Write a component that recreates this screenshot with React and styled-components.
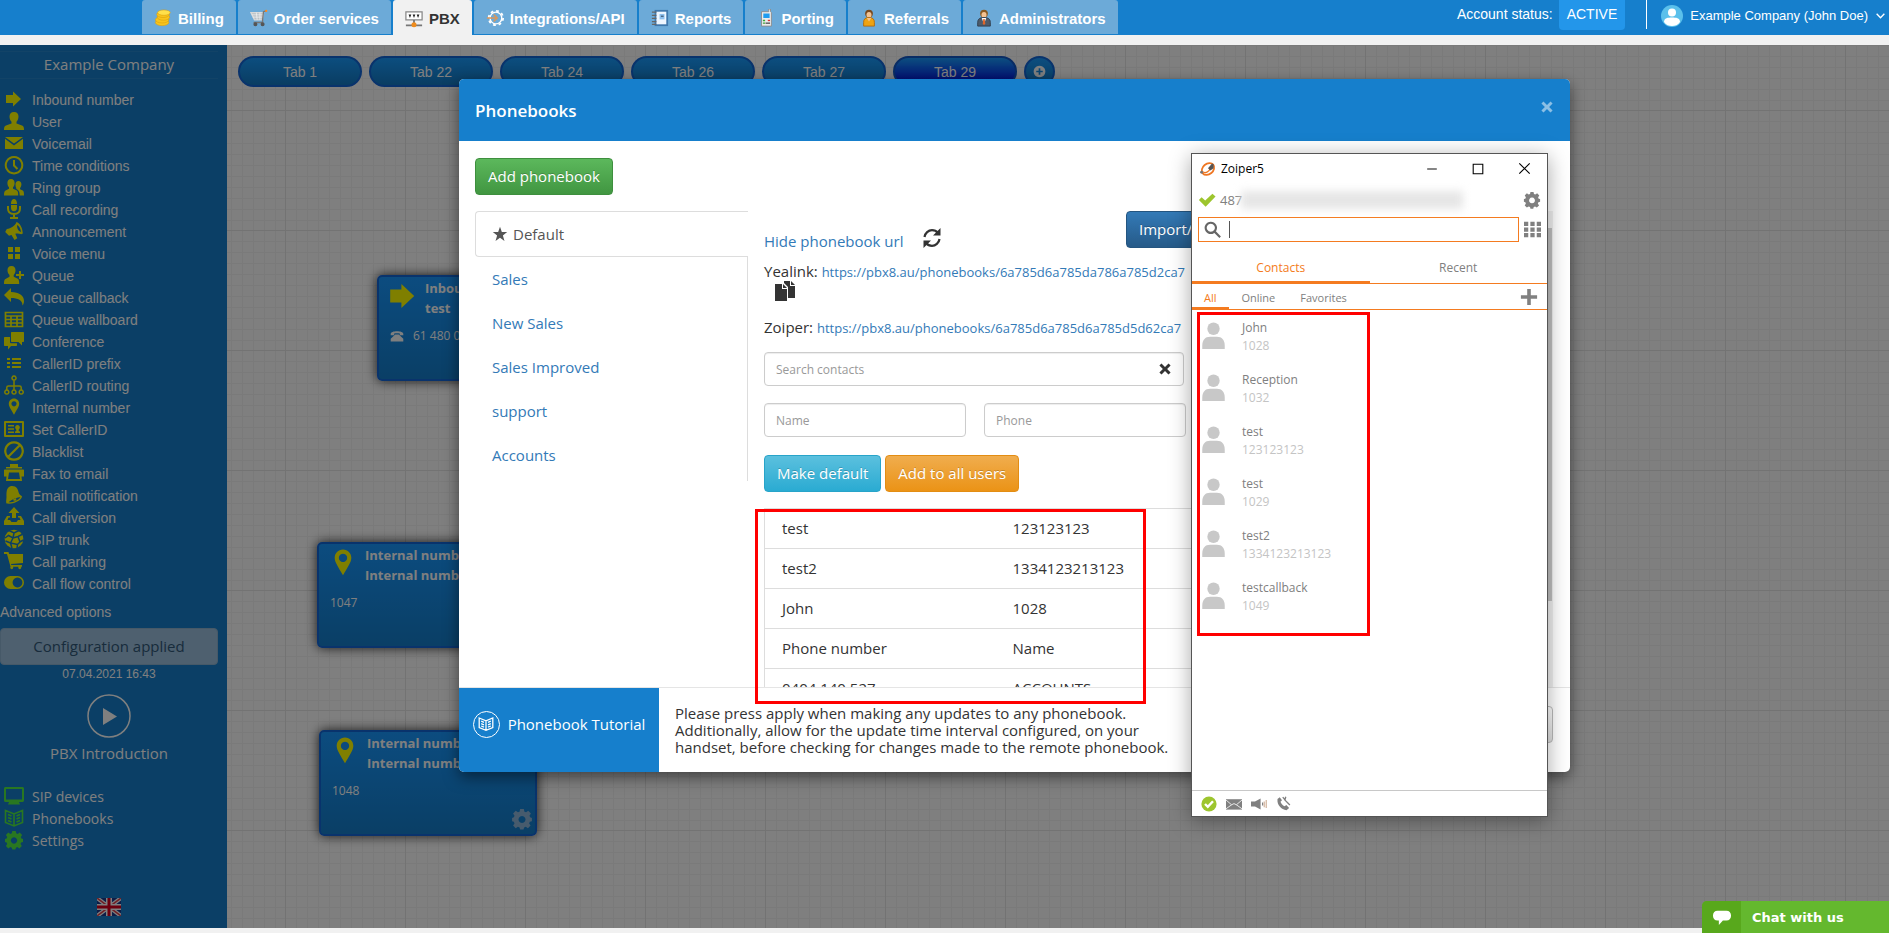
import { useState } from "react";
import styled, { createGlobalStyle, css } from "styled-components";

const sans = `"Liberation Sans", Arial, sans-serif`;
const humanist = `"Open Sans", "Noto Sans", sans-serif`;

const ICONS = {
  arrow: <path d="M2 6h7V2.500l8 7.500-8 7.500V14H2z" />,
  user: (
    <path d="M10 1c3 0 4.500 2 4.500 4.500 0 2-.8 4-2 5.200v1.800l5.500 2c1.300.5 2 1.500 2 4.500H0c0-3 .7-4 2-4.500l5.500-2v-1.800c-1.200-1.200-2-3.200-2-5.200C5.500 3 7 1 10 1z" />
  ),
  mail: <path d="M1 4h18l-9 6.500zM1 5.800l9 6.700 9-6.700V16H1z" />,
  clock: (
    <path
      d="M10 2a8.200 8.200 0 1 0 .01 0M10 5v5.500l3.500 3.500"
      fill="none"
      stroke="currentColor"
      strokeWidth="2"
    />
  ),
  group: (
    <path d="M7 2c2.500 0 3.600 1.700 3.600 4 0 1.800-.6 3.300-1.600 4.300v1.500l3.500 1.500c1.200.6 1.700 1.700 1.700 5.200H0c0-3.500.5-4.600 1.700-5.100L5 11.800v-1.500C4 9.300 3.400 7.800 3.400 6 3.400 3.700 4.500 2 7 2zM14.500 4c1.900 0 2.900 1.400 2.900 3.300 0 1.500-.5 2.800-1.300 3.600v1.300l2.600 1.300c1 .5 1.300 1.700 1.300 5h-4.300c0-3.500-.6-5.300-3.400-6.500v-1.100c-.6-.8-.8-1.900-.8-3.300 0-2 1-3.600 3-3.600z" />
  ),
  mic: (
    <>
      <path d="M7 4.500C7 2 8.300 0 10 0s3 2 3 4.500V5H7zM7 6h6v3c0 2-1 3.200-3 3.200S7 11 7 9z" />
      <path
        d="M4 7v2.500c0 3.500 2 5.500 6 5.500s6-2 6-5.500V7M10 15v4M6 19h8"
        fill="none"
        stroke="currentColor"
        strokeWidth="2"
      />
    </>
  ),
  horn: (
    <path d="M12.500 1c3 1 6 5 6.300 11.500l-1.500.8c-2-.8-4-1-6-.5l2 4.500-2.800 1.600-3-4.900-2.500.7L1.200 11l1.600-3C7 7.500 11 5 12.500 1zm.7 3c-.5 3 1 6 3.800 7-.4-3.500-2-6-3.800-7z" />
  ),
  tiles: <path d="M4 4h5v5H4zM11 4h5v5h-5zM4 11h5v5H4zM11 11h5v5h-5z" />,
  userPlus: (
    <path d="M7.500 1c2.800 0 4 1.800 4 4.200 0 2-.7 3.600-1.800 4.700v1.800l4 2c1.200.6 1.500 2 1.500 5.300H0c0-3.500.4-4.500 1.500-5l4-2.300V9.900C4.300 8.800 3.500 7.200 3.500 5.200 3.500 2.800 4.700 1 7.500 1zM15 6h2v3h3v2h-3v3h-2v-3h-3V9h3z" />
  ),
  reply: <path d="M7 1v4c8 0 13 3.500 13 9 0 1.500-.4 3-1.500 4.500C18.500 13 14 11 7 11v4L0 8z" />,
  table: (
    <path
      d="M1.500 3.500h17v14h-17zM1.500 7h17M1.500 10.500h17M1.500 14h17M7 7v10M13 7v10"
      fill="none"
      stroke="currentColor"
      strokeWidth="1.700"
    />
  ),
  chat: (
    <path d="M8 1h11c.7 0 1 .3 1 1v8c0 .7-.3 1-1 1h-1v3.500L14.500 11H8c-.7 0-1-.3-1-1V2c0-.7.3-1 1-1zM1 6h5v5c0 .8.400 1.300 1.200 1.300H13V14c0 .7-.3 1-1 1H7l-3 3.500V15H1c-.7 0-1-.3-1-1V7c0-.7.3-1 1-1z" />
  ),
  list: <path d="M3 5h3v2H3zM8 5h9v2H8zM3 9h3v2H3zM8 9h9v2H8zM3 13h3v2H3zM8 13h9v2H8z" />,
  tree: (
    <path
      d="M10 1a2 2 0 1 0 .01 0M10 5.500V15M2.800 15v-2.500C2.800 11.500 3.500 11 4.500 11h11c1 0 1.700.5 1.700 1.500V15M2.800 15a2 2 0 1 0 .01 0M10 15a2 2 0 1 0 .01 0M17.200 15a2 2 0 1 0 .01 0"
      fill="none"
      stroke="currentColor"
      strokeWidth="1.500"
    />
  ),
  pin: (
    <path
      fillRule="evenodd"
      d="M10 1.500c3 0 5.200 2.300 5.200 5.200 0 3-2.500 6-5.200 11-2.700-5-5.200-8-5.200-11 0-2.900 2.200-5.200 5.200-5.200zm0 2.700a2.600 2.600 0 1 0 .01 0z"
    />
  ),
  idCard: (
    <>
      <path
        d="M1 3h18v14H1z"
        fill="none"
        stroke="currentColor"
        strokeWidth="2"
        strokeLinejoin="round"
      />
      <path d="M4 6h6v1.500H4zM4 9.200h6v1.500H4zM4 12.400h6V14H4zM13.500 6c1.500 0 2.300 1 2.300 2.300 0 1-.4 1.800-1 2.200l-.2 1.500 1.400.5V14h-5v-1.500l1.400-.5-.2-1.500c-.6-.4-1-1.200-1-2.200C11.200 7 12 6 13.500 6z" />
    </>
  ),
  ban: (
    <path
      d="M10 1.300a8.700 8.700 0 1 0 .01 0M4.500 15.500l11-11"
      fill="none"
      stroke="currentColor"
      strokeWidth="2.200"
    />
  ),
  printer: (
    <path
      fillRule="evenodd"
      d="M6 1h8v3h4v1.500H2V4h4zM1 6.500h18c.6 0 1 .4 1 1v6h-2.500L18 18H2l.5-4.500H0v-6c0-.6.4-1 1-1zM5 9.500L4 16h12l-1-6.500z"
    />
  ),
  bell: (
    <path
      fillRule="evenodd"
      d="M7 1c5.500-.5 7 3 7.500 6 .5 2.500 2 3.300 3.500 4.300 0 3.500-7 8.200-15.500 7.200-.8-1.500 0-4 0-6.500C2.500 8 2 2.500 7 1zm9.500 11c-3 .5-8.500 2-12 5.300 4.500.2 10-2 12-5.300zM9 14.500l3-1.300c.8 1 .2 2.300-1 2.600-1 .2-1.800-.3-2-1.300z"
    />
  ),
  upload: (
    <path d="M10 0l5.500 6H12v5H8V6H4.500zM3 9h3v1.500H4.500L3.500 13H6l1.500 2h5L14 13h2.500l-1-2.500H14V9h3l3 5v4H0v-4z" />
  ),
  ball: (
    <>
      <circle cx="10" cy="10" r="9.300" />
      <path
        d="M5 1.500L10 4l5-2.500M10 4l-1 5M1 9l3.500-2.500L9 9l5-1.500 4-2M14 7.500l2 5.500 3.500-2M9 9l-2.500 5L1.500 12M6.500 14l1.500 5M6.500 14l7 1.500L16 13M13.500 15.500L13 19"
        fill="none"
        stroke="#167fcc"
        strokeWidth="1.500"
      />
    </>
  ),
  cart: (
    <path d="M0 1h4.500l.6 2H19v9l-12 1 .3 1H18v1.800h-1a1.500 1.500 0 1 1-2.500 0H9a1.500 1.500 0 1 1-2.500 0L3 3H0z" />
  ),
  toggle: (
    <path
      fillRule="evenodd"
      d="M6.500 3h7a6.500 6.500 0 0 1 0 13h-7a6.500 6.500 0 0 1 0-13zm7 1.600a4.900 4.900 0 1 0 .01 0z"
    />
  ),
  monitor: (
    <path
      fillRule="evenodd"
      d="M1.500 1h17c.8 0 1.500.6 1.500 1.500v12c0 .9-.7 1.500-1.500 1.500H15l1 2.500H4L5 16H1.500C.7 16 0 15.400 0 14.500v-12C0 1.600.7 1 1.500 1zM2 3v10.500h16V3z"
    />
  ),
  book: (
    <path
      d="M1.500 2.500L10 6l8.500-3.500v12L10 18l-8.500-3.500zM10 6v12M4 6.500l3.500 1.500M4 9.500L7.500 11M4 12.500L7.500 14M16 6.500L12.500 8M16 9.500L12.500 11M16 12.500L12.500 14"
      fill="none"
      stroke="currentColor"
      strokeWidth="1.600"
    />
  ),
  gear: (
    <path
      fillRule="evenodd"
      d="M8.300 1h3.400l.5 2.300 1.500.6 2-1.300 2.400 2.400-1.300 2 .6 1.500L19 9v3l-1.900.5-.6 1.500 1.300 2-2.400 2.400-2-1.300-1.500.6-.5 1.900H8.300l-.5-1.900-1.500-.6-2 1.300L1.900 16l1.300-2-.6-1.500L1 12V9l1.600-.5.6-1.500-1.300-2 2.400-2.400 2 1.300 1.500-.6zM10 7.300a3.200 3.200 0 1 0 .01 0z"
    />
  ),
  phone: (
    <path d="M1 7c0-5 18-5 18 0v2h-5V6.500c-2-.8-6-.8-8 0V9H1zM7.500 8h5l6.500 6v4H1v-4z" />
  ),
  refresh: (
    <>
      <path
        d="M2.500 9C3 5 6.500 2.200 10 2.200c2.500 0 4.500 1 6 2.800M17.500 11c-.5 4-4 6.800-7.500 6.800-2.500 0-4.500-1-6-2.800"
        fill="none"
        stroke="currentColor"
        strokeWidth="2.200"
      />
      <path d="M18.500 0v7.500H11zM1.500 20v-7.500H9z" />
    </>
  ),
  copy: (
    <path d="M0 3h7v5h5v12H0zM8 3l4 4H8zM9 0h6v5h5v12h-7V6L9 2zM16 0l4 4h-4z" />
  ),
  star: <path d="M10 1l2.300 6.600H19l-5.400 4.200 2 6.900L10 14.600l-5.600 4.100 2-6.900L1 7.600h6.700z" />,
  cross: (
    <path d="M5 2l5 5 5-5 3 3-5 5 5 5-3 3-5-5-5 5-3-3 5-5-5-5z" />
  ),
  plusCircle: (
    <path
      fillRule="evenodd"
      d="M10 1a9 9 0 1 0 .01 0zM8.700 5h2.600v3.700H15v2.600h-3.700V15H8.700v-3.700H5V8.700h3.700z"
    />
  ),
  check: <path d="M1 10l3-3 4 3.500L16 3l3.500 3L8.500 17.500z" />,
  search: (
    <path
      d="M8 2a6 6 0 1 0 .01 0M12.500 12.500L19 19"
      fill="none"
      stroke="currentColor"
      strokeWidth="2.500"
    />
  ),
  grid: (
    <path d="M0 1h5v5H0zM7.500 1h5v5h-5zM15 1h5v5h-5zM0 7.500h5v5H0zM7.500 7.500h5v5h-5zM15 7.500h5v5h-5zM0 14h5v5H0zM7.500 14h5v5h-5zM15 14h5v5h-5z" />
  ),
  plus: <path d="M8 1h4v7h7v4h-7v7H8v-7H1V8h7z" />,
  minimize: <path d="M2 10h16" fill="none" stroke="currentColor" strokeWidth="1.600" />,
  maximize: <path d="M2 2h16v16H2z" fill="none" stroke="currentColor" strokeWidth="1.800" />,
  close: <path d="M2 2l16 16M18 2L2 18" fill="none" stroke="currentColor" strokeWidth="1.800" />,
  okBadge: (
    <>
      <circle cx="10" cy="10" r="9.500" />
      <path d="M5 10l3.500 3.500L15 6.500" fill="none" stroke="#fff" strokeWidth="3" />
    </>
  ),
  envelope: (
    <>
      <path d="M0 4h20v13H0z" />
      <path d="M0 5l7 6 3-1.500 3 1.500 7-6M0 16l7-5M20 16l-7-5" fill="none" stroke="#fff" />
    </>
  ),
  speaker: (
    <>
      <path d="M0 7h5l7-4v14l-7-4H0z" />
      <path d="M14.500 8v4" stroke="currentColor" strokeWidth="1.500" />
      <path d="M16.500 7v7M19 5v10" stroke="#c9a58a" strokeWidth="1.300" />
    </>
  ),
  handset: (
    <>
      <path d="M2 4l3-2.500 3 4-2 2c.7 2.500 2.700 4.800 5.500 6l2.300-1.500L17.500 16 14 19C7 18 1 12 2 4z" />
      <path d="M18.500 12L11 4.500M9 1.500l2.500 3M13 1l-1 4" fill="none" stroke="currentColor" strokeWidth="1.800" />
    </>
  ),
  bubble: <path d="M5 3h10c3 0 5 2 5 5v1c0 3-2 5-5 5h-4l-4.500 5V14H5c-3 0-5-2-5-5V8c0-3 2-5 5-5z" />,
  caret: <path d="M3 7l7 7 7-7" fill="none" stroke="currentColor" strokeWidth="2.500" />,
};

const Icon = ({ name, size = 20, ...rest }) => (
  <Svg viewBox="0 0 20 20" $size={size} aria-hidden="true" {...rest}>
    {ICONS[name]}
  </Svg>
);

const NAV_ART = {
  Billing: (
    <g fill="#f8c41c" stroke="#d99c0c" strokeWidth=".6">
      <ellipse cx="9" cy="15" rx="7.500" ry="3.500" />
      <ellipse cx="9" cy="12" rx="7.500" ry="3.500" />
      <ellipse cx="10.500" cy="9" rx="7" ry="3.500" />
      <ellipse cx="10" cy="6" rx="7" ry="3.500" />
      <ellipse cx="11" cy="4" rx="7" ry="3" fill="#ffe04a" />
    </g>
  ),
  "Order services": (
    <g fill="none" stroke="#d8d8d8" strokeWidth="1.500">
      <path d="M1 4h14l-1.500 8H5z" fill="#b9c0c6" />
      <path d="M2 6.500h13M3 9h11M7 4l1 8M11 4v8" stroke="#f4f4f4" strokeWidth=".8" />
      <path d="M18 2l-3 1-1 9v3H4" stroke="#777" />
      <circle cx="6" cy="17" r="1.500" fill="#555" stroke="#555" />
      <circle cx="14" cy="17" r="1.500" fill="#555" stroke="#555" />
      <circle cx="18" cy="2" r="1.300" fill="#ff8a1c" stroke="none" />
    </g>
  ),
  PBX: (
    <g>
      <path d="M1 2h18v9H1z" fill="#fff" stroke="#888" strokeWidth="1.400" />
      <path d="M4 5h3l-1.500 4zM8.500 5h3L10 9zM13 5h3l-1.500 4z" fill="#222" />
      <path d="M10 11v4M1 17h18" stroke="#777" strokeWidth="2" />
      <circle cx="10" cy="16.500" r="2.800" fill="#ef8c1d" />
    </g>
  ),
  "Integrations/API": (
    <g fill="none">
      <circle cx="11" cy="10" r="8" stroke="#fff" strokeWidth="2" strokeDasharray="3.100 3.180" />
      <circle cx="11" cy="10" r="6.500" stroke="#fff" strokeWidth="1.500" />
      <path d="M1 10h11M8.500 6l4 4-4 4" stroke="#d9975a" strokeWidth="1.600" />
    </g>
  ),
  Reports: (
    <g>
      <path d="M4 1h15v18H4z" fill="#3f78ad" />
      <path d="M6 3h11v14H6z" fill="#eef6ff" />
      <path d="M9.500 5.500h5.500v6H9.500z" fill="#8ec0ee" />
      <path d="M11 8h3" stroke="#234" />
      <path d="M1 3.500h5M1 7h5M1 10.500h5M1 14h5M1 17h5" stroke="#666" strokeWidth="1.300" />
    </g>
  ),
  Porting: (
    <g>
      <path d="M5 3h8V0h2v3l1 1v15H5z" fill="#ececec" stroke="#8b8b8b" />
      <path d="M7 5h7v5H7z" fill="#1f9cf0" />
      <path d="M6.500 12h2.500v1.500H6.500zM6.500 15h2.500v1.500H6.500z" fill="#3aa53a" />
      <path d="M12 12h2.500v1.500H12z" fill="#d33" />
      <path d="M9.500 15h5v1.500h-5z" fill="#555" />
    </g>
  ),
  Referrals: (
    <g>
      <circle cx="10" cy="5" r="4.300" fill="#7a4a1e" />
      <ellipse cx="10" cy="6.500" rx="2.800" ry="3.300" fill="#f4c393" />
      <path d="M4 19v-4c0-4 2-5.500 6-5.500s6 1.500 6 5.500v4z" fill="#eea312" stroke="#b46a08" />
      <path d="M7.500 10h5L10 14z" fill="#f4c393" />
    </g>
  ),
  Administrators: (
    <g>
      <circle cx="10" cy="5" r="4.300" fill="#8a5a22" />
      <ellipse cx="10" cy="6.500" rx="2.800" ry="3.300" fill="#f4c393" />
      <path d="M3 19v-4c0-4 2.500-5.500 7-5.500s7 1.500 7 5.500v4z" fill="#4d5b6b" stroke="#2f3b49" />
      <path d="M7.500 10h5L10 17z" fill="#fff" />
      <path d="M9.200 11h1.600l.6 5-1.400 2-1.400-2z" fill="#e0662a" />
    </g>
  ),
};

const SIDEBAR_ITEMS = [
  ["arrow", "Inbound number"],
  ["user", "User"],
  ["mail", "Voicemail"],
  ["clock", "Time conditions"],
  ["group", "Ring group"],
  ["mic", "Call recording"],
  ["horn", "Announcement"],
  ["tiles", "Voice menu"],
  ["userPlus", "Queue"],
  ["reply", "Queue callback"],
  ["table", "Queue wallboard"],
  ["chat", "Conference"],
  ["list", "CallerID prefix"],
  ["tree", "CallerID routing"],
  ["pin", "Internal number"],
  ["idCard", "Set CallerID"],
  ["ban", "Blacklist"],
  ["printer", "Fax to email"],
  ["bell", "Email notification"],
  ["upload", "Call diversion"],
  ["ball", "SIP trunk"],
  ["cart", "Call parking"],
  ["toggle", "Call flow control"],
];

const SYSTEM_ITEMS = [
  ["monitor", "SIP devices"],
  ["book", "Phonebooks"],
  ["gear", "Settings"],
];

const CANVAS_TABS = ["Tab 1", "Tab 22", "Tab 24", "Tab 26", "Tab 27", "Tab 29"];

const NODES = [
  { id: 1, x: 150, y: 230, icon: "arrow", title: "Inbound number", name: "test", value: "61 480 000 000", phone: true },
  { id: 2, x: 90, y: 497, icon: "pin", title: "Internal number", name: "Internal number", value: "1047" },
  { id: 3, x: 92, y: 685, icon: "pin", title: "Internal number", name: "Internal number", value: "1048" },
];

const PHONEBOOKS = ["Sales", "New Sales", "Sales Improved", "support", "Accounts"];

const ENTRIES = [
  ["test", "123123123"],
  ["test2", "1334123213123"],
  ["John", "1028"],
  ["Phone number", "Name"],
  ["0404 140 527", "ACCOUNTS"],
];

const CONTACTS = [
  ["John", "1028"],
  ["Reception", "1032"],
  ["test", "123123123"],
  ["test", "1029"],
  ["test2", "1334123213123"],
  ["testcallback", "1049"],
];

const TopBar = () => (
  <Header>
    <Nav>
      {Object.keys(NAV_ART).map((label) => (
        <NavTab key={label} href="#" $active={label === "PBX"}>
          <Svg viewBox="0 0 20 20" $size={18} aria-hidden="true">
            {NAV_ART[label]}
          </Svg>
          {label}
        </NavTab>
      ))}
    </Nav>
    <Account>
      <span>Account status:</span>
      <Status>ACTIVE</Status>
      <AccountMenu>
        <Svg viewBox="0 0 22 22" $size={22} aria-hidden="true">
          <circle cx="11" cy="11" r="11" fill="#5bc0eb" />
          <circle cx="11" cy="7.500" r="4" fill="#fff" />
          <path d="M3 17c0-4 4-4.500 8-4.500s8 .5 8 4.500c-2 3-5 4-8 4s-6-1-8-4z" fill="#fff" />
        </Svg>
        Example Company (John Doe)
        <Icon name="caret" size={11} />
      </AccountMenu>
    </Account>
  </Header>
);

const Sidebar = () => (
  <Side>
    <Company>Example Company</Company>
    <Menu>
      {SIDEBAR_ITEMS.map(([icon, label]) => (
        <MenuItem key={label}>
          <MenuLink href="#">
            <Icon name={icon} />
            {label}
          </MenuLink>
        </MenuItem>
      ))}
    </Menu>
    <Advanced href="#">Advanced options</Advanced>
    <Applied disabled>Configuration applied</Applied>
    <AppliedAt>07.04.2021 16:43</AppliedAt>
    <Intro href="#">
      <Svg viewBox="0 0 44 44" $size={44} aria-hidden="true">
        <circle cx="22" cy="22" r="21" fill="none" stroke="currentColor" strokeWidth="1.500" />
        <path d="M16 14l14 8.500L16 31z" />
      </Svg>
      PBX Introduction
    </Intro>
    <Menu $system>
      {SYSTEM_ITEMS.map(([icon, label]) => (
        <MenuItem key={label}>
          <MenuLink href="#" $system>
            <Icon name={icon} />
            {label}
          </MenuLink>
        </MenuItem>
      ))}
    </Menu>
    <Language aria-label="English">
      <Flag viewBox="0 0 24 18" aria-hidden="true">
        <path d="M0 0h24v18H0z" fill="#1a3a8f" />
        <path d="M0 0l24 18M24 0L0 18" stroke="#fff" strokeWidth="4" />
        <path d="M0 0l24 18M24 0L0 18" stroke="#e0404a" strokeWidth="1.500" />
        <path d="M12 0v18M0 9h24" stroke="#fff" strokeWidth="6" />
        <path d="M12 0v18M0 9h24" stroke="#d8001c" strokeWidth="3" />
      </Flag>
    </Language>
  </Side>
);

const Node = ({ node }) => (
  <NodeCard style={{ left: node.x, top: node.y }}>
    <NodeHead>
      <NodeIcon>
        <Icon name={node.icon} size={32} />
      </NodeIcon>
      <div>
        <div>{node.title}</div>
        <div>{node.name}</div>
      </div>
    </NodeHead>
    <NodeValue>
      {node.phone && <Icon name="phone" size={14} />}
      {node.value}
    </NodeValue>
    <NodeSettings aria-label="Node settings">
      <Icon name="gear" size={22} />
    </NodeSettings>
  </NodeCard>
);

const Phonebooks = () => (
  <Modal role="dialog" aria-labelledby="phonebooks-title">
    <ModalHeader>
      <ModalTitle id="phonebooks-title">Phonebooks</ModalTitle>
      <ModalClose aria-label="Close">
        <Icon name="cross" size={14} />
      </ModalClose>
    </ModalHeader>
    <ModalBody>
      <Button $kind="success">Add phonebook</Button>
      <Split>
        <BookList>
          <BookLink href="#" $active>
            <Icon name="star" size={16} />
            Default
          </BookLink>
          <BookRest>
            {PHONEBOOKS.map((name) => (
              <BookLink key={name} href="#">
                {name}
              </BookLink>
            ))}
          </BookRest>
        </BookList>
        <Details>
          <UrlToggle>
            <a href="#">Hide phonebook url</a>
            <IconButton aria-label="Refresh">
              <Icon name="refresh" />
            </IconButton>
            <Button $kind="primary">Import/Export</Button>
          </UrlToggle>
          <UrlLine>
            Yealink: <UrlLink href="#">https://pbx8.au/phonebooks/6a785d6a785da786a785d2ca7</UrlLink>
          </UrlLine>
          <CopyButton aria-label="Copy url">
            <Icon name="copy" />
          </CopyButton>
          <UrlLine>
            Zoiper: <UrlLink href="#">https://pbx8.au/phonebooks/6a785d6a785d6a785d5d62ca7</UrlLink>
          </UrlLine>
          <SearchField>
            <TextInput placeholder="Search contacts" aria-label="Search contacts" />
            <ClearButton aria-label="Clear search">
              <Icon name="cross" size={14} />
            </ClearButton>
          </SearchField>
          <NewEntry>
            <TextInput placeholder="Name" aria-label="Name" />
            <TextInput placeholder="Phone" aria-label="Phone" />
          </NewEntry>
          <Actions>
            <Button $kind="info">Make default</Button>
            <Button $kind="warning">Add to all users</Button>
          </Actions>
          <Entries>
            <tbody>
              {ENTRIES.map(([name, phone]) => (
                <tr key={name}>
                  <td>{name}</td>
                  <td>{phone}</td>
                </tr>
              ))}
            </tbody>
          </Entries>
        </Details>
        <ScrollTrack>
          <ScrollThumb />
        </ScrollTrack>
      </Split>
    </ModalBody>
    <ModalFooter>
      <Tutorial href="#">
        <BookBadge>
          <Icon name="book" size={16} />
        </BookBadge>
        Phonebook Tutorial
      </Tutorial>
      <FooterNote>
        Please press apply when making any updates to any phonebook. Additionally, allow for the
        update time interval configured, on your handset, before checking for changes made to the
        remote phonebook.
      </FooterNote>
      <Button $kind="plain">Close</Button>
    </ModalFooter>
    <Highlight $left={296} $top={430} $width={391} $height={195} />
  </Modal>
);

const Softphone = () => {
  const [query, setQuery] = useState("");

  return (
    <Window>
      <TitleBar>
        <Svg viewBox="0 0 20 20" $size={16} aria-hidden="true">
          <ellipse cx="10" cy="10" rx="8.500" ry="6.500" fill="none" stroke="#ef7622" strokeWidth="2.200" transform="rotate(-40 10 10)" />
          <path d="M3 13c3 3 9 1 10-5" fill="none" stroke="#ef7622" strokeWidth="1.500" />
          <path d="M10 9l5-6 2 1v5l-4 3z" fill="#555" />
          <circle cx="2" cy="14" r="1.800" fill="#777" />
        </Svg>
        <WindowTitle>Zoiper5</WindowTitle>
        <WindowButton aria-label="Minimize">
          <Icon name="minimize" size={12} />
        </WindowButton>
        <WindowButton aria-label="Maximize">
          <Icon name="maximize" size={12} />
        </WindowButton>
        <WindowButton aria-label="Close window">
          <Icon name="close" size={13} />
        </WindowButton>
      </TitleBar>
      <SoftRow>
        <Green name="check" size={18} />
        <AccountNumber>487</AccountNumber>
        <Redacted />
        <IconButton aria-label="Settings">
          <Icon name="gear" size={18} />
        </IconButton>
      </SoftRow>
      <SoftRow $search>
        <SoftSearch>
          <Icon name="search" size={17} />
          <Cursor />
          <input
            aria-label="Search"
            value={query}
            onChange={(event) => setQuery(event.target.value)}
          />
        </SoftSearch>
        <IconButton aria-label="Dialpad">
          <Icon name="grid" size={17} />
        </IconButton>
      </SoftRow>
      <SoftTabs>
        <SoftTab $active>Contacts</SoftTab>
        <SoftTab>Recent</SoftTab>
      </SoftTabs>
      <Filters>
        <Filter $active>All</Filter>
        <Filter>Online</Filter>
        <Filter>Favorites</Filter>
        <IconButton aria-label="Add contact">
          <Icon name="plus" size={18} />
        </IconButton>
      </Filters>
      <ContactList>
        {CONTACTS.map(([name, number]) => (
          <Contact key={number}>
            <Svg viewBox="0 0 20 24" $size={27} aria-hidden="true">
              <circle cx="10" cy="6" r="5.500" />
              <path d="M0 24v-3c0-5 2.500-8 7-8h6c4.500 0 7 3 7 8v3z" />
            </Svg>
            <div>
              <ContactName>{name}</ContactName>
              <ContactNumber>{number}</ContactNumber>
            </div>
          </Contact>
        ))}
      </ContactList>
      <StatusBar>
        <Green name="okBadge" size={16} />
        <Icon name="envelope" size={16} />
        <Icon name="speaker" size={16} />
        <Icon name="handset" size={15} />
      </StatusBar>
      <Highlight $left={5} $top={158} $width={173} $height={324} />
    </Window>
  );
};

const App = () => (
  <Page>
    <GlobalStyle />
    <TopBar />
    <Main>
      <Sidebar />
      <Canvas>
        <CanvasTabs>
          {CANVAS_TABS.map((tab) => (
            <CanvasTab key={tab} $active={tab === "Tab 29"}>
              {tab}
            </CanvasTab>
          ))}
          <CanvasTab $round aria-label="Add tab">
            <Icon name="plusCircle" size={13} />
          </CanvasTab>
        </CanvasTabs>
        {NODES.map((node) => (
          <Node key={node.id} node={node} />
        ))}
      </Canvas>
      <Backdrop>
        <Phonebooks />
      </Backdrop>
    </Main>
    <Softphone />
    <ChatButton>
      <ChatIcon>
        <Icon name="bubble" size={18} />
      </ChatIcon>
      Chat with us
    </ChatButton>
  </Page>
);

export default App;

const GlobalStyle = createGlobalStyle`
  * {
    box-sizing: border-box;
  }

  body {
    margin: 0;
    background: #f1f1f1;
    font-family: ${sans};
    font-size: 14px;
    overflow: hidden;
  }

  button,
  input {
    font: inherit;
    color: inherit;
  }

  button {
    cursor: pointer;
  }

  a {
    text-decoration: none;
  }
`;

const Svg = styled.svg`
  width: ${(props) => props.$size}px;
  height: ${(props) => props.$size}px;
  flex: none;
  display: block;
  fill: currentColor;
`;

const Page = styled.div`
  position: relative;
  height: 100vh;
  display: flex;
  flex-direction: column;
  padding-bottom: 5px;
`;

const Header = styled.header`
  height: 35px;
  margin-bottom: 10px;
  flex: none;
  display: flex;
  justify-content: space-between;
  background: #167fcc;
  color: white;
`;

const Nav = styled.nav`
  display: flex;
  gap: 2px;
  padding-left: 142px;
`;

const NavTab = styled.a`
  height: ${(props) => (props.$active ? 35 : 34)}px;
  display: flex;
  align-items: center;
  gap: 6px;
  padding: 2px 12px 0;
  background: ${(props) => (props.$active ? "#f1f1f1" : "#6caad8")};
  color: ${(props) => (props.$active ? "#333" : "white")};
  border-radius: 3px 3px 0 0;
  font-size: 15px;
  font-weight: bold;
`;

const Account = styled.div`
  display: flex;
  align-items: flex-start;
  padding-right: 3px;
  line-height: 29px;
`;

const Status = styled.span`
  height: 30px;
  margin: 0 21px 0 6px;
  padding: 0 8px;
  background: #2396ea;
  border-radius: 0 0 4px 4px;
`;

const AccountMenu = styled.button`
  height: 29px;
  display: flex;
  align-items: center;
  gap: 7px;
  padding: 2px 0 0 14px;
  background: none;
  border: 0;
  border-left: 1px solid white;
  font-size: 13px;
`;

const Main = styled.main`
  position: relative;
  flex: 1;
  min-height: 0;
  display: grid;
  grid-template-columns: 227px 1fr;
  overflow: hidden;
`;

const Side = styled.aside`
  display: flex;
  flex-direction: column;
  padding: 6px 9px 0 0;
  background: #167fcc;
  color: white;
`;

const Company = styled.div`
  height: 28px;
  margin-bottom: 10px;
  line-height: 24px;
  text-align: center;
  font-family: ${humanist};
  font-size: 15px;
  border: solid #2487cf;
  border-width: 1px 0;
`;

const Menu = styled.ul`
  list-style: none;
  margin: 0;
  padding: 0;
  margin-top: ${(props) => (props.$system ? 21 : 0)}px;
`;

const MenuItem = styled.li`
  height: 22px;
`;

const MenuLink = styled.a`
  display: flex;
  gap: 8px;
  padding-left: 4px;
  line-height: 22px;
  color: white;
  font-family: ${(props) => (props.$system ? humanist : sans)};

  svg {
    color: ${(props) => (props.$system ? "#52ee42" : "#ff0")};
  }
`;

const Advanced = styled.a`
  margin: 6px 0 5px;
  line-height: 22px;
  color: white;
`;

const Applied = styled.button`
  height: 37px;
  padding: 0 0 2px;
  background: #9cc0de;
  border: 1px solid #8db2d0;
  border-radius: 4px;
  color: #305878;
  font-family: ${humanist};
  font-size: 15px;
`;

const AppliedAt = styled.time`
  font-size: 12px;
  line-height: 18px;
  text-align: center;
`;

const Intro = styled.a`
  display: flex;
  flex-direction: column;
  align-items: center;
  gap: 4px;
  margin: 11px 0 1px;
  line-height: 22px;
  color: white;
  font-family: ${humanist};
  font-size: 15px;
`;

const Language = styled.button`
  margin: 46px auto 0;
  padding: 0;
  background: none;
  border: 0;
`;

const Flag = styled.svg`
  display: block;
  width: 24px;
  height: 18px;
`;

const Canvas = styled.section`
  position: relative;
  padding: 11px;
  background-color: white;
  background-image:
    linear-gradient(#e6e6e6 1px, transparent 1px),
    linear-gradient(90deg, #e6e6e6 1px, transparent 1px),
    repeating-linear-gradient(#f5f5f5 0 1px, transparent 1px 11px),
    repeating-linear-gradient(90deg, #f5f5f5 0 1px, transparent 1px 11px);
  background-size: 120px 120px;
  background-position: 58px 65px;
`;

const CanvasTabs = styled.div`
  display: flex;
  gap: 7px;
`;

const CanvasTab = styled.button`
  width: ${(props) => (props.$round ? 31 : 124)}px;
  height: 31px;
  display: flex;
  align-items: center;
  justify-content: center;
  padding: 0;
  color: white;
  border: 2px solid ${(props) => (props.$active ? "#1258c8" : "#1266d8")};
  border-radius: 16px;
  background: linear-gradient(
    #189cff,
    ${(props) => (props.$active ? "#0000e0" : "#147ac4")}
  );
`;

const NodeCard = styled.article`
  position: absolute;
  width: 218px;
  min-height: 106px;
  padding: 1px 11px;
  color: white;
  border: 2px solid #1266d8;
  border-radius: 5px;
  background: linear-gradient(#1898ff, #147ecc);
  box-shadow: 0 0 12px rgba(0, 0, 0, 0.8);
  font-family: ${humanist};
`;

const NodeHead = styled.div`
  display: flex;
  gap: 9px;
  font-size: 13px;
  font-weight: bold;
  line-height: 20px;
  white-space: nowrap;
`;

const NodeIcon = styled.div`
  width: 26px;
  display: flex;
  justify-content: center;
  padding-top: 2px;
  color: #ff0;
`;

const NodeValue = styled.div`
  display: flex;
  align-items: center;
  gap: 9px;
  margin-top: 8px;
  font-size: 12px;
  line-height: 20px;
`;

const NodeSettings = styled.button`
  position: absolute;
  right: 2px;
  bottom: 4px;
  padding: 0;
  border: 0;
  background: none;
  color: #8fb6da;
`;

const Backdrop = styled.div`
  position: absolute;
  inset: 0;
  padding: 34px 319px 0 459px;
  background: rgba(0, 0, 0, 0.5);
`;

const Modal = styled.section`
  position: relative;
  background: white;
  border-radius: 5px;
  box-shadow: 0 5px 15px rgba(0, 0, 0, 0.5);
  color: #333;
  font-family: ${humanist};
  font-size: 15px;
`;

const ModalHeader = styled.header`
  height: 62px;
  display: flex;
  justify-content: space-between;
  align-items: center;
  padding: 0 16px;
  background: #167fcc;
  border-radius: 5px 5px 0 0;
  color: white;
`;

const ModalTitle = styled.h4`
  margin: 0;
  font-size: 17px;
  font-weight: 600;
`;

const ModalClose = styled.button`
  padding: 0 0 6px;
  border: 0;
  background: none;
  color: #8bbfe5;
`;

const ModalBody = styled.div`
  height: calc(100vh - 387px);
  padding: 17px 17px 0 16px;
  overflow: hidden;
`;

const KINDS = {
  success: ["#5cb85c", "#419641", "#3e8f3e", "white"],
  primary: ["#337ab7", "#265a88", "#245580", "white"],
  info: ["#5bc0de", "#2aabd2", "#28a4c9", "white"],
  warning: ["#f0ad4e", "#eb9316", "#e38d13", "white"],
  plain: ["#ffffff", "#e0e0e0", "#bbbbbb", "#333"],
};

const Button = styled.button`
  height: 37px;
  padding: 0 12px 2px;
  color: ${(props) => KINDS[props.$kind][3]};
  border: 1px solid ${(props) => KINDS[props.$kind][2]};
  border-radius: 4px;
  background: linear-gradient(
    ${(props) => KINDS[props.$kind][0]},
    ${(props) => KINDS[props.$kind][1]}
  );
  text-shadow: ${(props) => (props.$kind === "plain" ? "none" : "0 -1px 0 rgba(0, 0, 0, 0.2)")};
`;

const IconButton = styled.button`
  padding: 0;
  border: 0;
  background: none;
`;

const Split = styled.div`
  display: grid;
  grid-template-columns: 273px 1fr 17px;
  margin-top: 16px;
  height: 100%;
`;

const BookList = styled.nav`
  display: flex;
  flex-direction: column;
`;

const BookRest = styled.div`
  padding-bottom: 4px;
  border-right: 1px solid #ddd;
`;

const BookLink = styled.a`
  height: 44px;
  display: flex;
  align-items: center;
  gap: 5px;
  padding-left: 17px;
  color: #337ab7;

  ${(props) =>
    props.$active &&
    css`
      height: 46px;
      padding-left: 16px;
      color: #555;
      border: 1px solid #ddd;
      border-right: 0;
      border-radius: 4px 0 0 4px;
    `}
`;

const Details = styled.div`
  min-width: 0;
  padding-left: 16px;
`;

const UrlToggle = styled.div`
  height: 42px;
  display: grid;
  grid-template-columns: 158px 204px max-content;

  a {
    align-self: end;
    line-height: 24px;
    color: #337ab7;
  }

  ${IconButton} {
    align-self: center;
    justify-self: start;
    padding-top: 12px;
  }
`;

const UrlLine = styled.div`
  margin-top: 7px;
  line-height: 22px;
  white-space: nowrap;
`;

const UrlLink = styled.a`
  color: #337ab7;
  font-size: 13px;
`;

const CopyButton = styled(IconButton)`
  display: block;
  margin: -2px 0 15px 11px;
`;

const SearchField = styled.div`
  position: relative;
  width: 420px;
  margin-top: 13px;
`;

const TextInput = styled.input`
  width: 100%;
  height: 34px;
  padding: 0 11px;
  border: 1px solid #ccc;
  border-radius: 4px;
  box-shadow: inset 0 1px 1px rgba(0, 0, 0, 0.075);
  font-size: 12px;

  &::placeholder {
    color: #999;
  }
`;

const ClearButton = styled(IconButton)`
  position: absolute;
  right: 12px;
  top: 10px;
`;

const NewEntry = styled.div`
  display: grid;
  grid-template-columns: 202px 202px;
  gap: 18px;
  margin-top: 17px;
`;

const Actions = styled.div`
  display: flex;
  gap: 4px;
  margin: 18px 0 16px;
`;

const Entries = styled.table`
  width: 100%;
  border-collapse: collapse;
  border: 1px solid #ddd;

  td {
    height: 40px;
    padding: 0 17px 2px;
    border-top: 1px solid #ddd;
  }

  td:first-child {
    width: 231px;
  }
`;

const ScrollTrack = styled.div`
  padding: 17px 1px;
  background: #f1f1f1;
`;

const ScrollThumb = styled.div`
  height: 373px;
  background: #c1c1c1;
`;

const ModalFooter = styled.footer`
  height: 85px;
  display: flex;
  align-items: center;
  padding-right: 17px;
  border-top: 1px solid #e5e5e5;

  ${Button} {
    margin: 0 0 12px auto;
    min-width: 80px;
  }
`;

const Tutorial = styled.a`
  width: 200px;
  align-self: stretch;
  display: flex;
  align-items: center;
  justify-content: center;
  gap: 8px;
  padding-bottom: 12px;
  background: #167fcc;
  border-radius: 0 0 0 5px;
  color: white;
`;

const BookBadge = styled.span`
  width: 27px;
  height: 27px;
  display: grid;
  place-items: center;
  border: 1px solid white;
  border-radius: 50%;
`;

const FooterNote = styled.p`
  max-width: 510px;
  margin: 0;
  padding-left: 16px;
  line-height: 17px;
`;

const Highlight = styled.div`
  position: absolute;
  left: ${(props) => props.$left}px;
  top: ${(props) => props.$top}px;
  width: ${(props) => props.$width}px;
  height: ${(props) => props.$height}px;
  border: 3px solid red;
  pointer-events: none;
`;

const Window = styled.section`
  position: absolute;
  top: 153px;
  right: 341px;
  width: 357px;
  height: 664px;
  display: flex;
  flex-direction: column;
  background: white;
  border: 1px solid #555;
  box-shadow: 0 4px 20px rgba(0, 0, 0, 0.35);
  color: #808080;
  font-family: ${humanist};
  font-size: 12px;
`;

const TitleBar = styled.header`
  height: 29px;
  display: flex;
  align-items: center;
  padding-left: 8px;
  color: black;
`;

const WindowTitle = styled.span`
  flex: 1;
  padding-left: 5px;
`;

const WindowButton = styled.button`
  width: 46px;
  height: 29px;
  display: grid;
  place-items: center;
  padding: 0;
  border: 0;
  background: none;
`;

const SoftRow = styled.div`
  height: ${(props) => (props.$search ? 26 : 33)}px;
  display: flex;
  align-items: center;
  gap: 5px;
  padding: 0 6px;

  ${IconButton} {
    margin-left: auto;
  }
`;

const Green = styled(Icon)`
  color: #9dc52e;
`;

const AccountNumber = styled.span`
  margin-left: -1px;
  font-size: 13px;
`;

const Redacted = styled.span`
  width: 222px;
  height: 18px;
  margin-left: -6px;
  background: #e6e6e6;
  filter: blur(4px);
`;

const SoftSearch = styled.label`
  flex: 1;
  height: 25px;
  display: flex;
  align-items: center;
  padding-left: 5px;
  border: 1px solid #f47b20;
  color: #666;

  input {
    flex: 1;
    min-width: 0;
    padding: 0 4px;
    border: 0;
    outline: 0;
    background: none;
  }
`;

const Cursor = styled.span`
  width: 1px;
  height: 17px;
  margin-left: 8px;
  background: #555;
`;

const SoftTabs = styled.div`
  height: 42px;
  display: grid;
  grid-template-columns: 1fr 1fr;
  border-bottom: 1px solid #f47b20;
`;

const SoftTab = styled.button`
  padding: 11px 0 0;
  border: 0;
  background: none;
  border-bottom: 2px solid ${(props) => (props.$active ? "#f47b20" : "transparent")};
  color: ${(props) => (props.$active ? "#f47b20" : "inherit")};
`;

const Filters = styled.div`
  height: 26px;
  display: flex;
  gap: 1px;
  border-bottom: 1px solid #f47b20;

  ${IconButton} {
    margin-left: auto;
    padding-right: 9px;
  }
`;

const Filter = styled.button`
  padding: 4px 12px 0;
  border: 0;
  background: none;
  border-bottom: 2px solid ${(props) => (props.$active ? "#f47b20" : "transparent")};
  color: ${(props) => (props.$active ? "#f47b20" : "inherit")};
  font-size: 11px;
`;

const ContactList = styled.ul`
  flex: 1;
  list-style: none;
  margin: 0;
  padding: 9px 0 0 8px;
`;

const Contact = styled.li`
  height: 52px;
  display: flex;
  gap: 15px;
  line-height: 18px;

  svg {
    margin-top: 3px;
    color: #c8c8c8;
  }
`;

const ContactName = styled.div`
  color: #808080;
`;

const ContactNumber = styled.div`
  color: #c4c4c4;
`;

const StatusBar = styled.footer`
  height: 26px;
  display: flex;
  align-items: center;
  gap: 9px;
  padding-left: 9px;
  border-top: 1px solid #c8c8c8;
`;

const ChatButton = styled.button`
  position: absolute;
  right: 0;
  bottom: 0;
  width: 187px;
  height: 32px;
  display: flex;
  align-items: center;
  gap: 11px;
  padding: 0;
  border: 0;
  border-radius: 5px 0 0 0;
  background: #64b82e;
  color: white;
  font-family: "DejaVu Sans", Verdana, sans-serif;
  font-size: 13px;
  font-weight: bold;
`;

const ChatIcon = styled.span`
  width: 39px;
  height: 32px;
  display: grid;
  place-items: center;
  background: #58a81c;
  border-radius: 5px 0 0 0;
`;
